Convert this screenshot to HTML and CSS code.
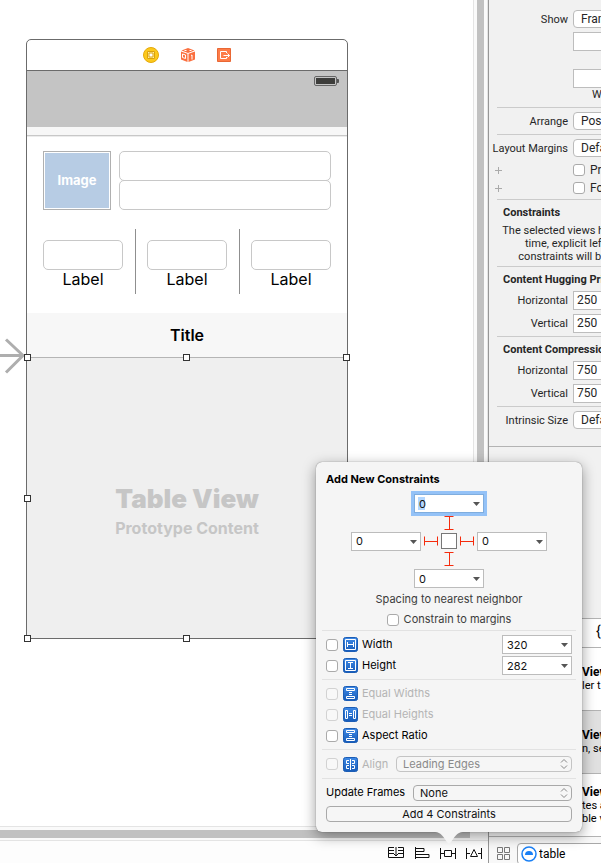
FILE: index.html
```html
<!DOCTYPE html>
<html lang="en">
<head>
<meta charset="utf-8">
<title>Interface Builder</title>
<link rel="stylesheet" href="styles.css">
</head>
<body>
<svg class="defs" aria-hidden="true">
  <defs>
    <linearGradient id="blue" x1="0" y1="0" x2="0" y2="1"><stop offset="0" stop-color="#3f8ae6"/><stop offset="1" stop-color="#165bb9"/></linearGradient>
    <symbol id="tile" viewBox="0 0 15 15"><rect x=".5" y=".5" width="14" height="14" rx="2" fill="url(#blue)" stroke="#1c5db5"/></symbol>
    <symbol id="equal-v" viewBox="0 0 15 15"><use href="#tile"/><path d="M3.500 2.500h8v2h-8zM3.500 10.500h8v2h-8zM6 6.500h3M6 8.500h3" fill="none" stroke="#fff"/></symbol>
    <symbol id="stepper" viewBox="0 0 8 12"><path d="M1 4.500 4 1.500 7 4.500M1 7.500 4 10.500 7 7.500" fill="none" stroke="#888"/></symbol>
    <symbol id="down" viewBox="0 0 7 4"><path d="M0 0h7L3.500 4z" fill="#555"/></symbol>
    <symbol id="strut" viewBox="0 0 14 14"><path d="M.5 2.500v9M13.500 2.500v9M0 7.500h14" fill="none" stroke="#f52b0c"/></symbol>
    <symbol id="strut-v" viewBox="0 0 14 14"><path d="M2.500 .5h9M2.500 13.500h9M7.500 0v14" fill="none" stroke="#f52b0c"/></symbol>
  </defs>
</svg>
<div class="window">
  <main class="canvas">
    <section class="viewport">
      <svg class="entry-arrow" viewBox="0 0 26 36"><path d="M0 17.500h23M6 1.500l17 16-17 17" fill="none" stroke="#aeaeae" stroke-width="3"/></svg>
      <article class="phone">
        <header class="scene-bar">
          <svg width="16" height="16" viewBox="0 0 16 16"><circle cx="8" cy="8" r="7.500" fill="#fcc91c" stroke="#e5a90b"/><path d="M4.500 4.500h7v7h-7z" fill="#fff0a6" stroke="#dca20c"/><path d="M6 6h4v4H6z" fill="#fff" stroke="#dca20c"/></svg>
          <svg width="14" height="14" viewBox="0 0 14 14"><path d="M.500 2.500 7 0l6.500 2.500L7 5zM0 3.500l6.500 2.300V14L0 11.500zM7.500 5.800 14 3.500v8L7.500 14z" fill="#fb7040"/><path d="M3.500 2.500h2M8.500 2.500h2M1.500 6v3.500l3 1v-3.500zM10 7.500l1-.5v4.500" fill="none" stroke="#fff"/></svg>
          <svg width="14" height="14" viewBox="0 0 14 14"><path d="M.5.5h13v13H.5z" fill="#fd7c48" stroke="#e96734"/><path d="M9.500 5V3.500h-6v7h6V9M6.500 7.500h6M10.500 5.500l2 2-2 2" fill="none" stroke="#fff"/></svg>
        </header>
        <div class="status">
          <svg width="25" height="10" viewBox="0 0 25 10"><rect x=".5" y=".5" width="22" height="9" rx="1.500" fill="#c4c4c4" stroke="#666"/><path d="M2 2h19v6H2z" fill="#3d3d3b"/><path d="M23 3h1q1 0 1 1v2q0 1-1 1h-1z" fill="#555"/></svg>
        </div>
        <div class="nav-edge"></div>
        <div class="profile">
          <div class="image-view"><span>Image</span></div>
          <div class="fields">
            <input type="text" aria-label="First field">
            <input type="text" aria-label="Second field">
          </div>
        </div>
        <div class="stats">
          <label class="stat"><input type="text"><span>Label</span></label>
          <label class="stat"><input type="text"><span>Label</span></label>
          <label class="stat"><input type="text"><span>Label</span></label>
        </div>
        <h2 class="nav-title">Title</h2>
        <div class="table-view">
          <strong>Table View</strong>
          <span>Prototype Content</span>
          <i class="handle top left"></i><i class="handle top mid"></i><i class="handle top right"></i>
          <i class="handle center left"></i>
          <i class="handle bottom left"></i><i class="handle bottom mid"></i><i class="handle bottom right"></i>
        </div>
      </article>
    </section>
    <div class="scroll-y"><i></i></div>
    <div class="scroll-x"><i></i></div>
    <footer class="canvas-bar">
      <button type="button" aria-label="Update frames"><svg width="16" height="12" viewBox="0 0 16 12"><path d="M6 .5H.5v10h15V.5H10M1 3.500h5M10 3.500h5M1 6.500h4M11 6.500h4M8 0v9M5 6l3 3 3-3" fill="none" stroke="#111"/></svg></button>
      <button type="button" aria-label="Align"><svg width="16" height="12" viewBox="0 0 16 12"><path d="M1.500 0v12M2 1.500h8v3H2M2 7.500h13v3H2" fill="none" stroke="#111"/></svg></button>
      <button type="button" aria-label="Add new constraints"><svg width="16" height="12" viewBox="0 0 16 12"><path d="M.5 1v11M15.500 1v11M1 6.500h3M12 6.500h3M4.500 3.500h7v6h-7z" fill="none" stroke="#111"/></svg></button>
      <button type="button" aria-label="Resolve issues"><svg width="16" height="12" viewBox="0 0 16 12"><path d="M.5 1v11M15.500 1v11M1 6.500h3M12 6.500h3M8 2.500l3.500 7h-7z" fill="none" stroke="#111"/></svg></button>
    </footer>
  </main>

  <aside class="side">
    <form class="inspector">
      <div class="row first"><label for="show">Show</label><select id="show"><option>Frame Rectangle</option></select></div>
      <div class="row coords"><span></span><input type="text" aria-label="X"></div>
      <div class="row sizes"><span></span><input type="text" aria-label="Width"></div>
      <div class="row unit"><span></span><span class="caption">Width</span></div>
      <hr>
      <div class="row popup"><label for="arrange">Arrange</label><select id="arrange"><option>Position View</option></select></div>
      <hr>
      <div class="row popup margins"><label for="margins">Layout Margins</label><select id="margins"><option>Default</option></select></div>
      <div class="row tick"><span class="plus"></span><label><input type="checkbox">Preserve Superview Margins</label></div>
      <div class="row tick"><span class="plus"></span><label><input type="checkbox">Follow Readable Width</label></div>
      <hr>
      <h3>Constraints</h3>
      <p>The selected views have no constraints. At build<br>time, explicit left, top, width, and height<br>constraints will be generated for the view.</p>
      <hr>
      <h3>Content Hugging Priority</h3>
      <div class="row number"><label for="hh">Horizontal</label><input id="hh" type="text" value="250"></div>
      <div class="row number"><label for="hv">Vertical</label><input id="hv" type="text" value="250"></div>
      <hr>
      <h3>Content Compression Resistance Priority</h3>
      <div class="row number"><label for="ch">Horizontal</label><input id="ch" type="text" value="750"></div>
      <div class="row number"><label for="cv">Vertical</label><input id="cv" type="text" value="750"></div>
      <hr>
      <div class="row popup"><label for="intrinsic">Intrinsic Size</label><select id="intrinsic"><option>Default (System Defined)</option></select></div>
    </form>
    <section class="library">
      <div class="tabs">{ }</div>
      <ul>
        <li><b>View</b><span>ler t</span></li>
        <li class="alt"><b>View</b><span>n, se</span></li>
        <li><b>View</b><span>tes a</span><span>ble v</span></li>
      </ul>
      <div class="filter">
        <svg width="13" height="13" viewBox="0 0 13 13"><path d="M.5.500h5v5h-5zM7.500.500h5v5h-5zM.5 7.500h5v5h-5zM7.500 7.500h5v5h-5z" fill="none" stroke="#777"/></svg>
        <label class="search">
          <svg width="16" height="16" viewBox="0 0 16 16"><circle cx="8" cy="8" r="7" fill="#fff" stroke="#1a80f5" stroke-width="1.500"/><path d="M4 9a4 4 0 0 1 8 0z" fill="#1a80f5"/></svg>
          <input type="text" value="table" aria-label="Filter objects">
        </label>
      </div>
    </section>
  </aside>
</div>

<form class="popover">
  <h1>Add New Constraints</h1>
  <div class="spacing">
    <div class="combo top focus"><input type="text" value="0" aria-label="Top spacing"><svg><use href="#down"/></svg></div>
    <svg class="strut s-top"><use href="#strut-v"/></svg>
    <div class="combo"><input type="text" value="0" aria-label="Leading spacing"><svg><use href="#down"/></svg></div>
    <svg class="strut"><use href="#strut"/></svg>
    <div class="square"></div>
    <svg class="strut"><use href="#strut"/></svg>
    <div class="combo"><input type="text" value="0" aria-label="Trailing spacing"><svg><use href="#down"/></svg></div>
    <svg class="strut s-bottom"><use href="#strut-v"/></svg>
    <div class="combo bottom"><input type="text" value="0" aria-label="Bottom spacing"><svg><use href="#down"/></svg></div>
  </div>
  <p class="hint">Spacing to nearest neighbor</p>
  <label class="to-margins"><input type="checkbox">Constrain to margins</label>
  <hr>
  <div class="options sized">
    <div class="option"><label><input type="checkbox"><svg class="icon" viewBox="0 0 15 15"><use href="#tile"/><path d="M2.500 2.500h10v10h-10zM4.500 5v5M10.500 5v5M5 7.500h5" fill="none" stroke="#fff"/></svg>Width</label><div class="combo"><input type="text" value="320" aria-label="Width value"><svg><use href="#down"/></svg></div></div>
    <div class="option"><label><input type="checkbox"><svg class="icon" viewBox="0 0 15 15"><use href="#tile"/><path d="M2.500 2.500h10v10h-10zM5 4.500h5M5 10.500h5M7.500 5v5" fill="none" stroke="#fff"/></svg>Height</label><div class="combo"><input type="text" value="282" aria-label="Height value"><svg><use href="#down"/></svg></div></div>
  </div>
  <hr>
  <div class="options ratios">
    <div class="option off"><label><input type="checkbox" disabled><svg class="icon"><use href="#equal-v"/></svg>Equal Widths</label></div>
    <div class="option off"><label><input type="checkbox" disabled><svg class="icon" viewBox="0 0 15 15"><use href="#tile"/><path d="M2.500 3.500h2v8h-2zM10.500 3.500h2v8h-2zM6 6.500h3M6 8.500h3" fill="none" stroke="#fff"/></svg>Equal Heights</label></div>
    <div class="option"><label><input type="checkbox"><svg class="icon"><use href="#equal-v"/></svg>Aspect Ratio</label></div>
  </div>
  <hr>
  <div class="option align off">
    <label><input type="checkbox" disabled><svg class="icon" viewBox="0 0 15 15"><use href="#tile"/><path d="M7.500 2v11M6 3.500H3.500v3H6M6 8.500H3.500v3H6M9 3.500h2.500v3H9M9 8.500h2.500v3H9" fill="none" stroke="#fff"/></svg>Align</label>
    <div class="drop"><select disabled aria-label="Align edges"><option>Leading Edges</option></select><svg><use href="#stepper"/></svg></div>
  </div>
  <hr>
  <div class="update">
    <label for="update">Update Frames</label>
    <div class="drop"><select id="update"><option>None</option></select><svg><use href="#stepper"/></svg></div>
  </div>
  <button class="add" type="button">Add 4 Constraints</button>
  <svg class="tip" viewBox="0 0 28 13"><path d="M0 0C6 0 9 6 12 10q2 3 4 0C19 6 22 0 28 0z" fill="#f5f5f5"/></svg>
</form>
</body>
</html>
```
FILE: styles.css
```css
* { box-sizing: border-box; }
body {
  margin: 0;
  font-family: Inter, "Liberation Sans", sans-serif;
  font-size: 11px;
  line-height: 13px;
  color: #262626;
  background: #fff;
  overflow: hidden;
}
h1, h2, h3, p, ul { margin: 0; padding: 0; }
ul { list-style: none; }
input, select, button { font: inherit; color: inherit; margin: 0; border-radius: 0; }
.defs { position: absolute; width: 0; height: 0; }
svg { display: block; flex: none; }

.window {
  display: grid;
  grid-template-columns: 1fr 113px;
  height: 100vh;
  position: relative;
}

/* Canvas */
.canvas {
  display: grid;
  grid-template-columns: 1fr 15px;
  grid-template-rows: 1fr 15px 22px;
  min-width: 0;
}
.viewport { position: relative; padding: 39px 26px 0; }
.entry-arrow { position: absolute; left: 0; top: 338px; width: 26px; height: 36px; }
.scroll-y { border-left: 1px solid #e4e4e4; background: #fafafa; padding: 0 3px; display: flex; border-right: 1px solid #e4e4e4; }
.scroll-y i { flex: 1; background: #c1c1c1; }
.scroll-x { grid-column: 1 / -1; border: solid #e4e4e4; border-width: 1px 0; background: #fafafa; padding: 3px 0 2px; display: flex; }
.scroll-x i { flex: 1; margin-right: 18px; background: #c1c1c1; }
.canvas-bar { grid-column: 1 / -1; display: flex; justify-content: flex-end; align-items: center; gap: 10px; padding: 2px 6px 0 0; background: #fdfdfd; }
.canvas-bar button { border: 0; padding: 0; background: none; }

.phone { width: 322px; border: 1px solid #6b6b6b; border-radius: 5px 5px 0 0; background: #fff; color: #000; }
.scene-bar { height: 31px; display: flex; justify-content: center; align-items: center; gap: 22px; border-bottom: 1px solid #6b6b6b; }
.status { height: 56px; background: #c4c4c4; display: flex; justify-content: flex-end; padding: 5px 8px; }
.nav-edge { height: 9px; background: #f7f7f7; border-bottom: 1px solid #c8c8c8; box-shadow: 0 1px #ececec; }
.profile { display: flex; gap: 8px; padding: 15px 16px 0; }
.image-view { width: 68px; border: 1px solid #b0b0b0; padding: 1px; display: flex; }
.image-view span { flex: 1; display: flex; align-items: center; justify-content: center; background: #b7cce4; color: #fff; font-size: 13px; font-weight: 700; }
.fields { flex: 1; display: flex; flex-direction: column; }
.fields input, .stat input { width: 100%; height: 30px; border: 1px solid #c8c8c8; border-radius: 5px; background: #fff; }
.fields input + input { margin-top: -1px; }
.stats { display: grid; grid-template-columns: repeat(3, 1fr); gap: 24px; padding: 19px 16px; }
.stat { position: relative; display: flex; flex-direction: column; align-items: center; height: 65px; padding-top: 11px; font-size: 16px; line-height: 19px; }
.stat + .stat::before { content: ""; position: absolute; left: -12px; top: 0; bottom: 0; width: 1px; background: #8f8f8f; }
.nav-title { height: 44px; background: #f7f7f7; font-size: 16px; line-height: 44px; font-weight: 600; text-align: center; }
.table-view { position: relative; height: 281px; border-top: 1px solid #b5b5b5; background: #efefef; color: #c6c6c6; display: flex; flex-direction: column; align-items: center; justify-content: center; padding-top: 25px; font-size: 16px; line-height: 24px; font-weight: 700; }
.table-view strong { font-size: 26px; line-height: 34px; }
.handle { position: absolute; width: 7px; height: 7px; border: 1px solid #333; background: #fff; }
.handle.top { top: -4px; }
.handle.center { top: 137px; }
.handle.bottom { bottom: -4px; }
.handle.left { left: -3px; }
.handle.mid { left: 156px; }
.handle.right { right: -3px; }

/* Inspector */
.side { min-width: 0; overflow: hidden; display: flex; flex-direction: column; border-left: 1px solid #979797; background: #f1f1f1; font-family: Roboto, "Liberation Sans", sans-serif; }
.inspector { flex: none; height: 447px; padding-top: 10px; border-bottom: 1px solid #b3b3b3; white-space: nowrap; }
.inspector hr { border: 0; height: 1px; margin: 0 0 0 8px; background: #cbcbcb; }
.row { display: grid; grid-template-columns: 79px 160px; gap: 5px; align-items: center; height: 23px; }
.row > label:first-child { text-align: right; }
.row input[type=text] { height: 19px; width: 160px; border: 1px solid #bdbdbd; background: #fff; padding: 0 3px; font-size: 12px; }
.row select { appearance: none; height: 18px; border: 1px solid #bbb; border-radius: 4px; background: #fff; padding: 0 7px; font-size: 12px; line-height: 16px; }
.row.first { height: 18px; }
.row.coords { height: 27px; }
.row.sizes { height: 19px; margin-top: 14px; }
.row.unit { height: 13px; margin-bottom: 6px; }
.caption { padding-left: 19px; }
.row.popup { height: 26px; }
.row.tick { height: 18px; }
.row.tick label { display: flex; align-items: center; gap: 5px; font-size: 12px; }
.plus { width: 7px; height: 7px; margin-left: 6px; background: linear-gradient(#aaa, #aaa) 50% 50% / 7px 1px no-repeat, linear-gradient(#aaa, #aaa) 50% 50% / 1px 7px no-repeat; }
input[type=checkbox] { appearance: none; flex: none; width: 12px; height: 12px; border: 1px solid #aaa; border-radius: 3px; background: #fff; }
.row.tick + hr { margin-top: 2px; }
.inspector h3 { font-size: 11px; line-height: 23px; font-weight: 700; padding: 1px 0 0 14px; }
.inspector p { width: 248px; padding-left: 13px; text-align: center; margin-bottom: 3px; }
.row.number { align-items: start; line-height: 19px; }
.row.number + hr { margin-top: -1px; }

/* Library */
.library { flex: 1; display: flex; flex-direction: column; justify-content: flex-end; color: #000; }
.tabs { height: 29px; border: solid #b3b3b3; border-width: 1px 0 0; background: #fff; padding: 6px 0 0 107px; font-size: 14px; white-space: nowrap; }
.library li { height: 63px; display: flex; flex-direction: column; justify-content: center; border-top: 1px solid #b3b3b3; background: #fff; padding-left: 93px; white-space: nowrap; }
.library li.alt { background: #e0e0e0; }
.library b { font-size: 12px; }
.filter { display: flex; align-items: flex-start; gap: 7px; height: 27px; padding: 6px 0 0 8px; border-top: 1px solid #b3b3b3; background: #f8f8f8; }
.filter > svg { margin-top: 4px; }
.search { display: flex; align-items: center; gap: 2px; height: 22px; width: 160px; flex: none; border: 1px solid #a8a8a8; border-radius: 4px; background: #fff; padding-left: 3px; }
.search input { width: 100px; border: 0; padding: 0; font-size: 12px; background: none; }

/* Popover */
.popover { position: absolute; right: 19px; bottom: 31px; width: 266px; padding: 9px 10px 10px; border-radius: 6px; background: #f5f5f5; box-shadow: 0 0 1px rgba(0,0,0,.6), 0 4px 14px rgba(0,0,0,.4); display: flex; flex-direction: column; }
.popover h1 { font-size: 11px; line-height: 16px; font-weight: 700; color: #000; }
.popover hr { width: 254px; height: 1px; border: 0; margin: 0 -4px; background: #e2e2e2; }
.spacing { display: grid; grid-template-columns: 70px 14px 16px 14px 70px; grid-template-rows: 19px 14px 16px 14px 19px; gap: 3px; justify-content: center; align-items: center; justify-items: center; margin-top: 7px; }
.top, .s-top, .s-bottom, .bottom { grid-column: 1 / -1; }
.strut { width: 14px; height: 14px; }
.square { width: 16px; height: 16px; border: 1px solid #777; background: #fff; }
.combo { position: relative; width: 70px; flex: none; }
.combo input { display: block; width: 100%; height: 19px; border: 1px solid #bcbcbc; background: #fff; padding: 0 4px; font-size: 11px; color: #111; }
.combo svg { position: absolute; right: 4px; top: 8px; width: 7px; height: 4px; }
.focus input { border-color: #7fadde; outline: 3px solid #94c2f7; background: linear-gradient(#b3d7ff, #b3d7ff) 3px 2px / 7px 13px no-repeat #fff; }
.hint { text-align: center; line-height: 15px; padding-top: 4px; color: #3c3c3c; }
.to-margins { display: flex; align-items: center; justify-content: center; gap: 5px; height: 23px; padding-top: 2px; color: #3c3c3c; }
.options { display: flex; flex-direction: column; }
.option { display: flex; align-items: center; justify-content: space-between; height: 21px; color: #000; }
.option label { display: flex; align-items: center; gap: 5px; }
.icon { width: 15px; height: 15px; margin-right: -1px; }
.off label { color: #b4b4b4; }
.off input { border-color: #d2d2d2; background: #f8f8f8; }
.sized { padding: 3px 0; }
.ratios { padding: 3px 0; }
.align { height: 28px; }
.drop { position: relative; display: flex; width: 176px; }
.drop select { appearance: none; width: 100%; height: 16px; border: 1px solid #a9a9a9; border-radius: 4px; background: #f6f6f6; padding: 0 6px; line-height: 14px; color: #111; opacity: 1; }
.drop svg { position: absolute; right: 4px; top: 2px; width: 8px; height: 12px; }
.off .drop select { color: #8a8a8a; border-color: #c4c4c4; }
.update { display: flex; align-items: center; justify-content: space-between; height: 27px; color: #000; }
.update .drop { width: 159px; }
.add { height: 16px; border: 1px solid #a9a9a9; border-radius: 4px; background: #f6f6f6; padding: 0; line-height: 14px; color: #111; }
.tip { position: absolute; left: 119px; top: 100%; width: 28px; height: 13px; }
```
